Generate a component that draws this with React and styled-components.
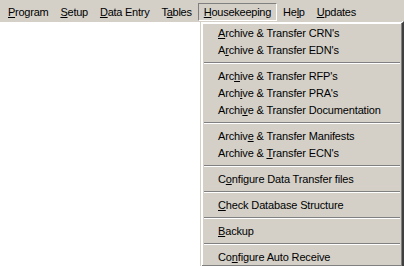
import React from 'react'
import styled, { createGlobalStyle } from 'styled-components'

const GlobalStyle = createGlobalStyle`
  html, body {
    margin: 0;
    padding: 0;
    background: #ffffff;
  }
  body {
    font-family: 'Liberation Sans', Arial, sans-serif;
    font-size: 11px;
    color: #000000;
  }
`

const Window = styled.div`
  position: relative;
  width: 404px;
  height: 266px;
  overflow: hidden;
  background: #ffffff;
`

const MenuBar = styled.div`
  display: flex;
  align-items: flex-start;
  height: 22px;
  box-sizing: border-box;
  padding: 3px 0 0 2px;
  background: #d4d0c8;
  letter-spacing: -0.25px;
`

const BarItem = styled.div`
  height: 18px;
  box-sizing: border-box;
  padding: 0 5px;
  display: flex;
  align-items: center;
  border: 1px solid;
  border-color: ${(p) =>
    p.$pressed ? '#808080 #ffffff #ffffff #808080' : 'transparent'};
  white-space: nowrap;
`

const Key = styled.span`
  text-decoration: underline;
  text-underline-offset: 1px;
`

const Dropdown = styled.div`
  position: absolute;
  left: 200px;
  top: 21px;
  width: 204px;
  box-sizing: border-box;
  padding: 1px;
  background: #d4d0c8;
  border: 2px solid;
  border-color: #ffffff #404040 #404040 #ffffff;
  box-shadow: inset -1px -1px 0 #808080, inset 1px 1px 0 #ffffff;
  letter-spacing: -0.15px;
  &::before {
    content: '';
    position: absolute;
    left: -2px;
    top: -2px;
    right: 0;
    height: 1px;
    background: #d4d0c8;
  }
  &::after {
    content: '';
    position: absolute;
    left: -2px;
    top: -2px;
    bottom: 0;
    width: 1px;
    background: #d4d0c8;
  }
`

const MenuItem = styled.div`
  height: 17px;
  display: flex;
  align-items: center;
  padding-left: 15px;
  white-space: nowrap;
`

const Separator = styled.div`
  height: 9px;
  display: flex;
  flex-direction: column;
  justify-content: center;
  margin: 0 1px;
  &::before {
    content: '';
    display: block;
    height: 1px;
    background: #808080;
  }
  &::after {
    content: '';
    display: block;
    height: 1px;
    background: #ffffff;
  }
`

const bar = [
  { pre: '', key: 'P', post: 'rogram' },
  { pre: '', key: 'S', post: 'etup' },
  { pre: '', key: 'D', post: 'ata Entry' },
  { pre: 'T', key: 'a', post: 'bles' },
  { pre: '', key: 'H', post: 'ousekeeping', pressed: true },
  { pre: 'He', key: 'l', post: 'p' },
  { pre: '', key: 'U', post: 'pdates' },
]

const menu = [
  { pre: '', key: 'A', post: 'rchive & Transfer CRN\'s' },
  { pre: 'A', key: 'r', post: 'chive & Transfer EDN\'s' },
  { sep: true },
  { pre: 'Arc', key: 'h', post: 'ive & Transfer RFP\'s' },
  { pre: 'Arch', key: 'i', post: 've & Transfer PRA\'s' },
  { pre: 'Archi', key: 'v', post: 'e & Transfer Documentation' },
  { sep: true },
  { pre: 'Archiv', key: 'e', post: ' & Transfer Manifests' },
  { pre: 'Archive & ', key: 'T', post: 'ransfer ECN\'s' },
  { sep: true },
  { pre: 'C', key: 'o', post: 'nfigure Data Transfer files' },
  { sep: true },
  { pre: '', key: 'C', post: 'heck Database Structure' },
  { sep: true },
  { pre: '', key: 'B', post: 'ackup' },
  { sep: true },
  { pre: 'Co', key: 'n', post: 'figure Auto Receive' },
]

const Label = ({ pre, k, post }) => (
  <span>
    {pre}
    <Key>{k}</Key>
    {post}
  </span>
)

const App = () => {
  return (
    <Window>
      <GlobalStyle />
      <MenuBar>
        {bar.map((b, i) => (
          <BarItem key={i} $pressed={b.pressed}>
            <Label pre={b.pre} k={b.key} post={b.post} />
          </BarItem>
        ))}
      </MenuBar>
      <Dropdown>
        {menu.map((m, i) =>
          m.sep ? (
            <Separator key={i} />
          ) : (
            <MenuItem key={i}>
              <Label pre={m.pre} k={m.key} post={m.post} />
            </MenuItem>
          )
        )}
      </Dropdown>
    </Window>
  )
}

export default App
